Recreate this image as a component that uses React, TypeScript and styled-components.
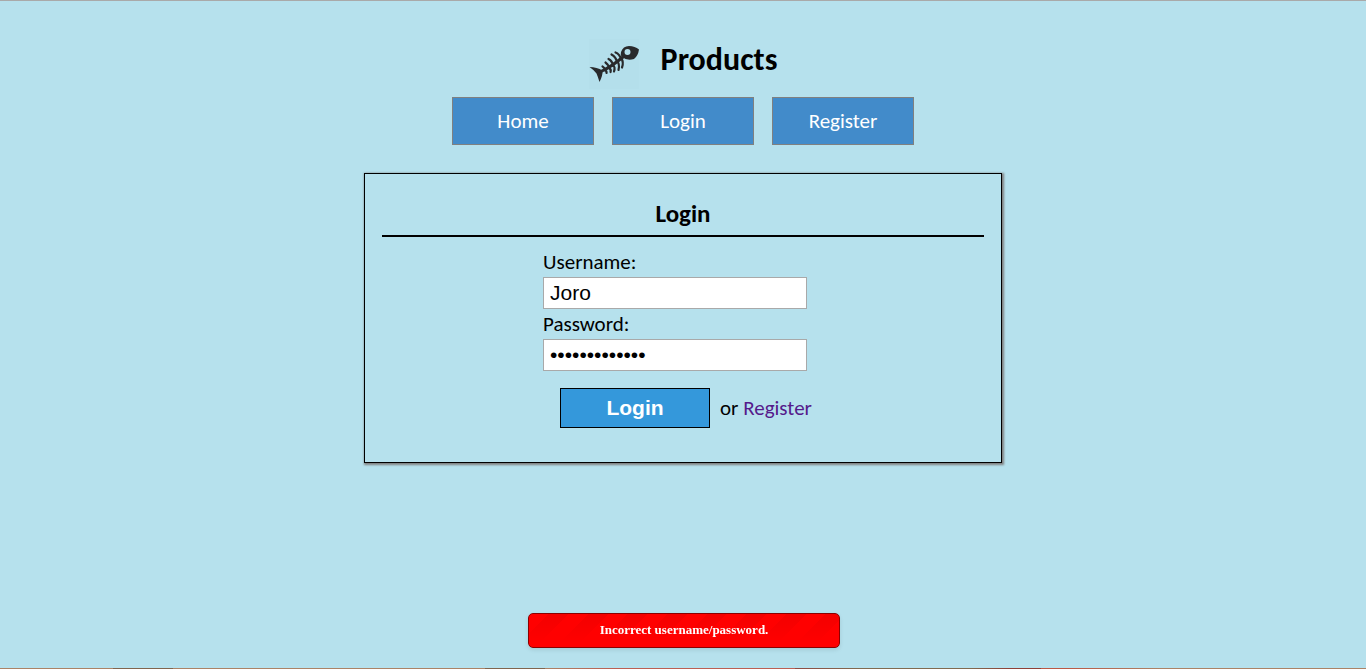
import React, { useState } from "react";
import styled, { createGlobalStyle } from "styled-components";

const GlobalStyle = createGlobalStyle`
  *, *::before, *::after { box-sizing: border-box; }
  body {
    margin: 0;
    background: #b6e1ed;
    color: #000;
    font-family: Calibri, Carlito, Lato, sans-serif;
    font-size: 21px;
    line-height: 24px;
  }
`;

const Page = styled.div`
  display: flex;
  flex-direction: column;
  align-items: center;
  min-height: 100vh;
  border-top: 1px solid #a9a9a9;
`;

const Header = styled.header`
  display: flex;
  justify-content: center;
  gap: 22px;
  padding-top: 38px;
`;

const Logo = styled.svg`
  display: block;
  width: 50px;
  height: 50px;
  background: #b4dfeb;
`;

const Title = styled.h1`
  margin: 0;
  font-size: 32px;
  line-height: 41px;
`;

const Nav = styled.nav`
  display: flex;
  flex-wrap: wrap;
  justify-content: center;
  gap: 18px;
  margin-top: 8px;
`;

const NavLink = styled.a`
  width: 142px;
  border: 1px solid #808080;
  background: #428bca;
  color: #fff;
  line-height: 46px;
  text-align: center;
  text-decoration: none;
`;

const Panel = styled.main`
  width: 638px;
  max-width: 100%;
  margin-top: 28px;
  padding: 20px 17px 34px;
  border: 1px solid #000;
  box-shadow: 1px 1px 2px 1px #808080;
`;

const PanelTitle = styled.h2`
  margin: 0 0 13px;
  padding-bottom: 2px;
  border-bottom: 2px solid #000;
  font-size: 25px;
  line-height: 39px;
  text-align: center;
`;

const Form = styled.form`
  display: flex;
  flex-direction: column;
  width: 280px;
  margin: 0 auto;
`;

const Label = styled.label`
  line-height: 24px;
  padding-bottom: 3px;
`;

const Input = styled.input`
  width: 264px;
  height: 32px;
  margin-bottom: 3px;
  padding: 0 6px;
  border: 1px solid #a9a9a9;
  border-radius: 0;
  background: #fff;
  color: #000;
  font: 21px "Liberation Sans", Arial, sans-serif;
  outline: none;
`;

const Actions = styled.div`
  display: flex;
  align-items: center;
  gap: 10px;
  margin-top: 14px;
  padding-left: 17px;
  white-space: nowrap;
`;

const Submit = styled.button`
  flex: none;
  width: 150px;
  height: 40px;
  padding: 0;
  border: 1px solid #000;
  background: #3498db;
  color: #fff;
  font: bold 21px "Liberation Sans", Arial, sans-serif;
  cursor: pointer;
`;

const TextLink = styled.a`
  color: #551a8b;
  text-decoration: none;
`;

const Notice = styled.div`
  position: fixed;
  bottom: 21px;
  left: 50%;
  width: 312px;
  margin-left: -155px;
  padding-bottom: 2px;
  border: 1px solid #8b0000;
  border-radius: 5px;
  background:
    linear-gradient(to bottom, transparent, #f00 85%),
    repeating-linear-gradient(135deg, #f00 0 14px, #f40000 14px 28px);
  box-shadow: 0 2px 4px rgba(0, 0, 0, 0.1);
  color: #fff;
  font: bold 13px/31px "Liberation Serif", "Times New Roman", serif;
  text-align: center;
`;

const BottomEdge = styled.div`
  position: fixed;
  right: 0;
  bottom: 0;
  left: 0;
  height: 1px;
  background: linear-gradient(
    to right,
    #ab8367 0 8.3%, #80654f 8.3% 12.7%, #ab8367 12.7% 35.5%,
    #80654f 35.5% 39.9%, #ab8367 39.9%, #bb5f53 45% 58.2%,
    #8e4b43 58.2%, #806b51 63% 71%, #8e4038 74% 76.2%,
    #bb5845 76.2% 78%, #ab8367 85%
  );
`;

const FishLogo = () => (
  <Logo viewBox="0 0 50 50" role="img" aria-label="Fish skeleton">
    <path
      fill="#292a2c"
      fillRule="evenodd"
      d="M32 13Q34 7 40 7Q46 7 50 10.5Q49 17 45 20Q38 22 33 18Q31 16 32 13ZM38.5 10A3 3 0 1 0 38.5 16A3 3 0 1 0 38.5 10Z"
    />
    <path fill="#292a2c" d="M0.5 28Q8 28 13.5 31.5Q14 36 10.5 43Q9 38 7.5 34.5Q5 31 0.5 28Z" />
    <g fill="none" stroke="#292a2c" strokeLinecap="round">
      <path strokeWidth="3" d="M12 32.5Q22 28 34 18" />
      <path strokeWidth="2.2" d="M16 31Q15.500 28.500 13.500 27.500M15.500 31Q18 32 17.500 34M20 29Q19.500 25.500 16.500 23.500M20 29Q22.500 30.500 21.500 33M24 27Q23.500 22 19.500 20M24 26Q26.500 28 25 32.500M28 23Q27 18 22.500 15.500M28 22Q31 25 29.500 31M32 20Q30.500 15 26.500 13.500M32 19Q35 23 33 28.500" />
    </g>
  </Logo>
);

export default function App() {
  const [username, setUsername] = useState("Joro");
  const [password, setPassword] = useState("password12345");

  return (
    <>
      <GlobalStyle />
      <Page>
        <Header>
          <FishLogo />
          <Title>Products</Title>
        </Header>
        <Nav>
          <NavLink href="#home">Home</NavLink>
          <NavLink href="#login">Login</NavLink>
          <NavLink href="#register">Register</NavLink>
        </Nav>
        <Panel>
          <PanelTitle>Login</PanelTitle>
          <Form onSubmit={(event) => event.preventDefault()}>
            <Label htmlFor="username">Username:</Label>
            <Input id="username" type="text" value={username} onChange={(e) => setUsername(e.target.value)} />
            <Label htmlFor="password">Password:</Label>
            <Input id="password" type="password" value={password} onChange={(e) => setPassword(e.target.value)} />
            <Actions>
              <Submit type="submit">Login</Submit>
              <span>or <TextLink href="#register">Register</TextLink></span>
            </Actions>
          </Form>
        </Panel>
      </Page>
      <Notice role="alert">Incorrect username/password.</Notice>
      <BottomEdge />
    </>
  );
}
